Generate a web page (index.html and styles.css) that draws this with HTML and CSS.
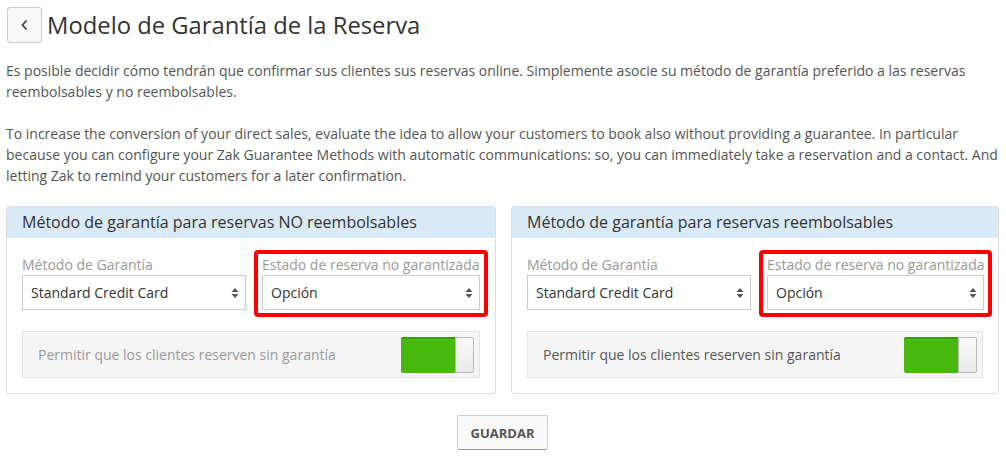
FILE: index.html
```html
<!DOCTYPE html>
<html lang="es">
<head>
    <meta charset="UTF-8">
    <meta name="viewport" content="width=device-width, initial-scale=1.0">
    <title>Modelo de Garantía de la Reserva</title>
    <link rel="stylesheet" href="styles.css">
</head>
<body>
    <div class="page">
        <div class="page-head">
            <button class="back-btn" type="button">
                <svg width="14" height="14" viewBox="0 0 14 14"><path d="M8.5 2.5 L4.5 7 L8.5 11.5" fill="none" stroke="#444" stroke-width="1.8"/></svg>
            </button>
            <h1>Modelo de Garantía de la Reserva</h1>
        </div>

        <p class="intro">
            Es posible decidir cómo tendrán que confirmar sus clientes sus reservas online. Simplemente asocie su método de garantía preferido a las reservas reembolsables y no reembolsables.<br><br>
            To increase the conversion of your direct sales, evaluate the idea to allow your customers to book also without providing a guarantee. In particular because you can configure your Zak Guarantee Methods with automatic communications: so, you can immediately take a reservation and a contact. And letting Zak to remind your customers for a later confirmation.
        </p>

        <div class="panels">
            <div class="panel">
                <div class="panel-heading">Método de garantía para reservas NO reembolsables</div>
                <div class="panel-body">
                    <div class="fields">
                        <div class="field">
                            <label>Método de Garantía</label>
                            <div class="select">Standard Credit Card
                                <svg class="arrows" width="8" height="12" viewBox="0 0 8 12"><path d="M4 1 L7.5 5 H0.5 Z M4 11 L7.5 7 H0.5 Z" fill="#555"/></svg>
                            </div>
                        </div>
                        <div class="field marked">
                            <label>Estado de reserva no garantizada</label>
                            <div class="select">Opción
                                <svg class="arrows" width="8" height="12" viewBox="0 0 8 12"><path d="M4 1 L7.5 5 H0.5 Z M4 11 L7.5 7 H0.5 Z" fill="#555"/></svg>
                            </div>
                        </div>
                    </div>
                    <div class="toggle-row muted">
                        <span>Permitir que los clientes reserven sin garantía</span>
                        <div class="switch"><span class="switch-on"></span><span class="switch-knob"></span></div>
                    </div>
                </div>
            </div>

            <div class="panel">
                <div class="panel-heading">Método de garantía para reservas reembolsables</div>
                <div class="panel-body">
                    <div class="fields">
                        <div class="field">
                            <label>Método de Garantía</label>
                            <div class="select">Standard Credit Card
                                <svg class="arrows" width="8" height="12" viewBox="0 0 8 12"><path d="M4 1 L7.5 5 H0.5 Z M4 11 L7.5 7 H0.5 Z" fill="#555"/></svg>
                            </div>
                        </div>
                        <div class="field marked">
                            <label>Estado de reserva no garantizada</label>
                            <div class="select">Opción
                                <svg class="arrows" width="8" height="12" viewBox="0 0 8 12"><path d="M4 1 L7.5 5 H0.5 Z M4 11 L7.5 7 H0.5 Z" fill="#555"/></svg>
                            </div>
                        </div>
                    </div>
                    <div class="toggle-row">
                        <span>Permitir que los clientes reserven sin garantía</span>
                        <div class="switch"><span class="switch-on"></span><span class="switch-knob"></span></div>
                    </div>
                </div>
            </div>
        </div>

        <div class="actions">
            <button class="save-btn" type="button">GUARDAR</button>
        </div>
    </div>
</body>
</html>
```

FILE: styles.css
```css
body {
    margin: 0;
    font-family: "Open Sans", "DejaVu Sans", sans-serif;
    font-size: 14px;
    color: #555;
    background: #fff;
}

.page {
    padding: 7px 7px 0 6px;
}

.page-head {
    display: flex;
    align-items: center;
    gap: 5px;
    padding-left: 1px;
}

.back-btn {
    width: 35px;
    height: 36px;
    padding: 0;
    display: flex;
    align-items: center;
    justify-content: center;
    background: #f8f8f8;
    border: 1px solid #ccc;
    border-radius: 3px;
}

h1 {
    margin: 0;
    font-size: 23.8px;
    font-weight: 400;
    color: #333;
    line-height: 32px;
}

.intro {
    margin: 17px 0 0;
    line-height: 21px;
}

.panels {
    display: grid;
    grid-template-columns: 490px 488px;
    align-items: start;
    gap: 15px;
    margin-top: 20px;
}

.panel {
    border: 1px solid #ddd;
    border-radius: 3px;
}

.panel-heading {
    background: #d9e9f6;
    color: #333;
    font-size: 16px;
    line-height: 21px;
    padding: 5px 15px 5px 15px;
}

.panel-body {
    padding: 17px 15px 15px 15px;
}

.fields {
    display: grid;
    grid-template-columns: 224px 1fr;
    gap: 16px;
}

.field {
    position: relative;
}

.field label {
    display: block;
    color: #999;
    line-height: 20px;
    white-space: nowrap;
}

.field.marked::after {
    content: "";
    position: absolute;
    top: -5px;
    left: -8px;
    right: -8px;
    bottom: -7px;
    border: 4px solid #f00;
    border-radius: 4px;
}

.select {
    position: relative;
    height: 35px;
    box-sizing: border-box;
    border: 1px solid #ccc;
    padding: 0 8px;
    line-height: 33px;
    color: #333;
    background: #fff;
}

.select .arrows {
    position: absolute;
    right: 6px;
    top: 11px;
}

.toggle-row {
    display: flex;
    align-items: center;
    justify-content: space-between;
    margin-top: 21px;
    height: 47px;
    box-sizing: border-box;
    padding: 0 5px 0 15px;
    background: #f5f5f5;
    border: 1px solid #e3e3e3;
    color: #555;
}

.toggle-row.muted {
    color: #999;
}

.switch {
    display: flex;
    width: 73px;
    height: 36px;
}

.switch-on {
    flex: 1;
    background: #47b90e;
    border-top: 2px solid #3a9a0a;
    border-radius: 2px 0 0 2px;
}

.switch-knob {
    width: 17px;
    background: linear-gradient(#fafafa, #e9e9e9);
    border: 1px solid #bbb;
    border-radius: 0 2px 2px 0;
}

.actions {
    display: flex;
    justify-content: center;
    margin-top: 21px;
}

.save-btn {
    font-family: "Open Sans", "DejaVu Sans", sans-serif;
    font-size: 13px;
    font-weight: 700;
    color: #555;
    width: 91px;
    height: 35px;
    background: #f9f9f9;
    border: 1px solid #ccc;
    border-bottom-color: #999;
    border-radius: 2px;
}
```
